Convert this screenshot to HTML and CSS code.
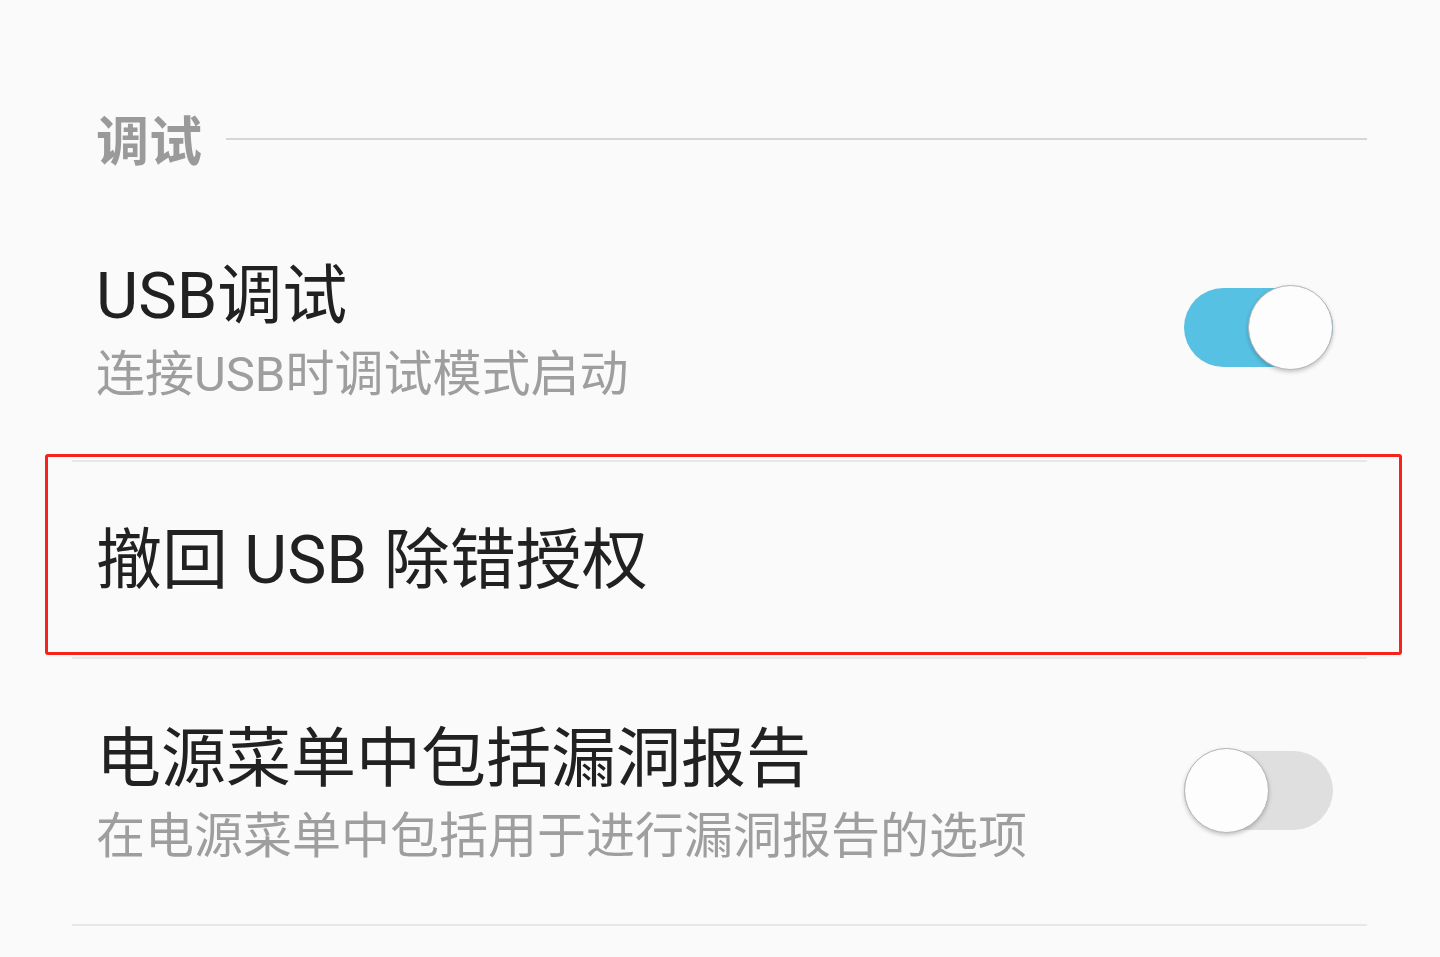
FILE: index.html
```html
<!DOCTYPE html>
<html lang="zh-CN">
<head>
<meta charset="utf-8">
<title>调试</title>
<link rel="stylesheet" href="styles.css">
</head>
<body>
<div class="page">
  <div class="section-header">
    <span class="section-title">调试</span>
    <span class="section-line"></span>
  </div>

  <div class="row row-first">
    <div class="texts">
      <div class="title">USB调试</div>
      <div class="summary">连接USB时调试模式启动</div>
    </div>
    <div class="switch on"><span class="thumb"></span></div>
  </div>

  <div class="row row-single">
    <div class="texts">
      <div class="title title-large">撤回 USB 除错授权</div>
    </div>
    <div class="highlight"></div>
  </div>

  <div class="row row-last">
    <div class="texts">
      <div class="title">电源菜单中包括漏洞报告</div>
      <div class="summary">在电源菜单中包括用于进行漏洞报告的选项</div>
    </div>
    <div class="switch off"><span class="thumb"></span></div>
  </div>
</div>
</body>
</html>
```

FILE: styles.css
```css
html, body {
  margin: 0;
  padding: 0;
  background: #fafafa;
}

body {
  font-family: "Roboto", "Noto Sans CJK SC", sans-serif;
  color: #212121;
  width: 1440px;
  height: 957px;
  overflow: hidden;
}

.page {
  padding: 112px 73px 0 72px;
}

.section-header {
  display: flex;
  align-items: center;
  padding-left: 24px;
  gap: 24px;
}

.section-title {
  font-family: "Noto Sans CJK SC", sans-serif;
  font-size: 53px;
  line-height: 52px;
  font-weight: 700;
  color: #9a9a9a;
}

.section-line {
  flex: 1;
  height: 2px;
  background: #d6d6d6;
  margin-top: 2px;
}

.row {
  position: relative;
  display: flex;
  align-items: center;
  justify-content: space-between;
  padding-left: 24px;
  padding-right: 34px;
  border-bottom: 2px solid #e8e8e8;
}

.row-first {
  padding-top: 100px;
  padding-bottom: 61px;
}

.row-single {
  padding-top: 66px;
  padding-bottom: 63px;
}

.row-last {
  padding-top: 68px;
  padding-bottom: 63px;
}

.texts {
  display: flex;
  flex-direction: column;
}

.title {
  font-size: 65px;
  line-height: 64px;
  color: #212121;
}

.title-large {
  font-size: 66px;
  line-height: 66px;
}

.summary {
  font-size: 49px;
  line-height: 49px;
  color: #9e9e9e;
  margin-top: 22px;
}

.row-last .summary {
  margin-top: 21px;
}

.switch {
  position: relative;
  width: 149px;
  height: 79px;
  border-radius: 40px;
  flex: none;
  margin-bottom: 8px;
}

.switch.on {
  background: #57c1e4;
}

.switch.off {
  background: #dfdfdf;
}

.thumb {
  position: absolute;
  top: -3px;
  width: 83px;
  height: 83px;
  border-radius: 50%;
  background: #fdfdfd;
  border: 1px solid #b4b4b4;
  box-shadow: 0 2px 4px rgba(0, 0, 0, 0.22);
}

.switch.on .thumb {
  left: 64px;
}

.switch.off .thumb {
  left: 0;
}

.highlight {
  position: absolute;
  left: -27px;
  right: -35px;
  top: -8px;
  bottom: 2px;
  border: 3px solid #f5231a;
  border-radius: 3px;
  pointer-events: none;
}
```
